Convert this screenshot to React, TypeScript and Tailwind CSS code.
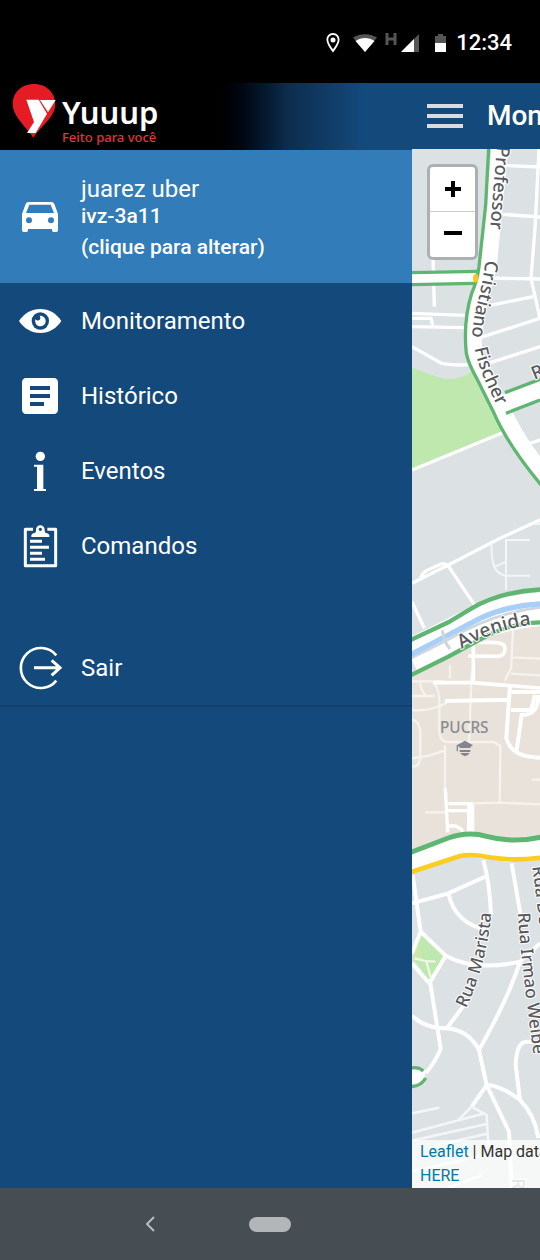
import React from "react";
import { MdArticle } from "react-icons/md";

function StatusBar() {
  return (
    <header className="flex h-[83px] shrink-0 items-center justify-end bg-black pt-[2px] pr-7 text-white">
      <svg className="mr-3 h-5 w-4" viewBox="0 0 16 20" aria-label="Localização">
        <path fillRule="evenodd" d="M8 0C4.100 0 1.500 3 1.500 6.700 1.500 11.500 8 19.500 8 19.500s6.500-8 6.500-12.800C14.500 3 11.900 0 8 0Zm0 2c2.700 0 4.700 2.100 4.700 4.700 0 2.900-2.900 7.100-4.700 9.600-1.800-2.500-4.700-6.700-4.700-9.600C3.300 4.100 5.300 2 8 2Z" fill="#fff" />
        <circle cx="8" cy="7" r="2.500" fill="#fff" />
      </svg>
      <svg className="mr-2 h-5 w-6" viewBox="0 0 24 20" aria-label="Wi-Fi">
        <path d="M0 4.500C7 0 17 0 24 4.500L12 19Z" fill="#555" />
        <path d="M2.500 8C8 4 16 4 21.500 8L12 19Z" fill="#fff" />
      </svg>
      <svg className="mr-4 h-5 w-[34px]" viewBox="0 0 34 20" aria-label="Sinal">
        <path d="M2 0V12M10 0V12M2 6H10" stroke="#555" strokeWidth="3" fill="none" />
        <path d="M34 1V19H16Z" fill="#555" />
        <path d="M29 6V19H16Z" fill="#fff" />
      </svg>
      <svg className="mr-[10px] h-5 w-[11px]" viewBox="0 0 11 20" aria-label="Bateria">
        <path d="M0 3H3V1H8V3H11V10H0Z" fill="#555" />
        <path d="M0 10H11V19H0Z" fill="#fff" />
      </svg>
      <time className="text-[22px] leading-7 font-medium">12:34</time>
    </header>
  );
}

function Logo() {
  return (
    <div className="flex h-[67px] bg-linear-to-r from-black from-50% via-[#0d2d4e] via-70% to-[#14497c] to-88% pl-3">
      <svg className="h-[65px] w-11 shrink-0" viewBox="36 24 132 195" aria-hidden="true">
        <path d="M102 27C65 27 38 53 38 87C38 124 77 153 100 188C123 153 166 126 166 87C166 53 138 27 102 27Z" fill="#e51c23" />
        <path d="M79 74H116L141 116L107 174H81L102 141Z" fill="#fff" />
        <path d="M120 75H167L144 112Z" fill="#fff" />
      </svg>
      <div className="ml-[6px] flex flex-col pt-[11px] font-['Noto_Sans',sans-serif]">
        <span className="text-[31px] leading-9 font-semibold text-white">Yuuup</span>
        <span className="text-[13px] leading-[14px] font-medium text-[#e3343c]">Feito para você</span>
      </div>
    </div>
  );
}

function CarIcon() {
  return (
    <svg className="size-12 shrink-0" viewBox="48 129 144 144" aria-hidden="true">
      <path fillRule="evenodd" d="M66 192L77 162Q79 156 86 156H154Q161 156 163 162L174 192V241Q174 246 169 246H161Q156 246 156 241V237H84V241Q84 246 79 246H71Q66 246 66 241ZM88 164L78 189H162L152 164ZM87 202A9 9 0 1 0 87 220A9 9 0 1 0 87 202ZM153 202A9 9 0 1 0 153 220A9 9 0 1 0 153 202Z" fill="#fff" />
    </svg>
  );
}

function EyeIcon() {
  return (
    <svg className="size-12" viewBox="48 36 144 144" aria-hidden="true">
      <path d="M57 108C72 85 95 72 121 72s48 13 63 36c-15 23-37 36-63 36S72 131 57 108Z" fill="#fff" />
      <circle cx="121" cy="108" r="26" fill="#14497c" />
      <path d="M121 92A16 16 0 1 1 106 103Q111 108 117 106Q124 101 119 92Z" fill="#fff" />
    </svg>
  );
}

function InfoIcon() {
  return (
    <svg className="size-12" viewBox="48 51 144 144" aria-hidden="true">
      <circle cx="121" cy="79" r="14" fill="#fff" />
      <path d="M102 104H130V177H138V183H102V177H111V110H102Z" fill="#fff" />
    </svg>
  );
}

function ClipboardIcon() {
  return (
    <svg className="size-12" viewBox="48 276 144 144" aria-hidden="true">
      <path d="M99 298H76V407H167V298H142" fill="none" stroke="#fff" strokeWidth="9" strokeLinejoin="round" />
      <path fillRule="evenodd" d="M94 321V315Q97 309 104 309Q109 308 108 299A13 13 0 1 1 134 299Q133 308 138 309Q145 309 148 315V321ZM121 293A5 5 0 1 0 121 303A5 5 0 1 0 121 293Z" fill="#fff" />
      <path d="M90 334H126M90 352H147M90 370H126M90 388H135" stroke="#fff" strokeWidth="9" />
    </svg>
  );
}

function ExitIcon() {
  return (
    <svg className="size-12" viewBox="48 72 144 144" aria-hidden="true">
      <path d="M169 106A60 60 0 1 0 169 182" fill="none" stroke="#fff" strokeWidth="8" />
      <path d="M102 143H180M155 121L180 143L155 166" fill="none" stroke="#fff" strokeWidth="9" />
    </svg>
  );
}

function MenuItem({ icon, label }: { icon: React.ReactNode; label: string }) {
  return (
    <a href="#" className="flex h-[75px] items-center gap-[17px] px-4 text-2xl text-white">
      {icon}
      <span>{label}</span>
    </a>
  );
}

function Drawer() {
  return (
    <aside className="w-[412px] shrink-0 bg-[#14497c]">
      <div className="border-b-2 border-[#123f6c]">
        <Logo />
        <button type="button" className="flex h-[133px] w-full items-center gap-[17px] bg-[#317cb9] px-4 text-left text-white">
          <CarIcon />
          <span className="flex flex-col pt-[6px]">
            <span className="text-2xl leading-7">juarez uber</span>
            <span className="text-[21px] leading-[26px] font-medium">ivz-3a11</span>
            <span className="text-[21px] leading-9 font-medium">(clique para alterar)</span>
          </span>
        </button>
        <nav>
          <MenuItem icon={<EyeIcon />} label="Monitoramento" />
          <MenuItem icon={<MdArticle className="size-12" />} label="Histórico" />
          <MenuItem icon={<InfoIcon />} label="Eventos" />
          <MenuItem icon={<ClipboardIcon />} label="Comandos" />
          <div className="mt-[47px]">
            <MenuItem icon={<ExitIcon />} label="Sair" />
          </div>
        </nav>
      </div>
    </aside>
  );
}

function MapDrawing() {
  return (
    <svg className="absolute inset-0 size-full" viewBox="21 12 384 3117" preserveAspectRatio="xMinYMin slice" aria-label="Mapa">
      <defs>
        <path id="professor" d="M276 2L253 280" />
        <path id="cristiano" d="M242 345Q232 420 217 475Q204 520 200 600" />
        <path id="fischer" d="M209 610Q221 680 286 800" />
        <path id="avenida" d="M170 1512Q270 1451 415 1433" />
        <path id="marista" d="M183 2590Q250 2450 262 2270" />
        <path id="irmao" d="M338 2304Q350 2480 402 2850" />
      </defs>
      <rect x="21" y="12" width="2400" height="3117" fill="#dce1e4" />
      <path d="M21 668L95 695Q150 715 198 680L290 860L21 975Z" fill="#bfe8af" />
      <path d="M21 1580L250 1470Q320 1435 420 1433V2080L300 2085L190 2065L21 2120Z" fill="#e8e2da" />
      <path d="M47 2360L120 2432L73 2510L25 2440Z" fill="#bfe8af" />
      <path d="M32 2390L44 2410L52 2435L21 2450Z" fill="#cfe6ac" />

      <g fill="none" stroke="#fff" strokeWidth="10">
        <path d="M290 61L405 66M275 207L405 216M402 12L390 250L378 400L405 520M235 399L405 402M250 482L385 455M225 578L405 520M250 655L405 605" />
        <path d="M84 340L88 485M21 505L180 511M21 545L180 548M21 520H78L84 545M21 605L110 655Q150 663 200 658M21 975L300 860M360 900L405 885" />
        <path d="M21 1315L140 1255L285 1180L405 1125M48 1297Q52 1280 75 1272L108 1257Q120 1253 132 1266L210 1382M21 1370L58 1450" />
      </g>
      <g fill="none" stroke="#f3f5f6" strokeWidth="6">
        <path d="M260 1195Q255 1290 305 1292H375M375 1185H303V1335M270 1265L303 1250M390 1137H405" />
      </g>

      <path d="M287 -10L268 180L250 370Q210 490 205 585Q205 640 248 715L315 840Q350 910 430 1005" fill="none" stroke="#fff" strokeWidth="50" />
      <path d="M21 400H215" stroke="#fff" strokeWidth="32" />
      <path d="M290 776L415 732" stroke="#fff" strokeWidth="48" />
      <g fill="none" stroke="#5fb572" strokeWidth="10">
        <path d="M251 10L242 180L222 365Q216 410 200 445Q174 530 184 625Q190 655 215 700L265 800Q305 895 410 1022" />
        <path d="M21 383L220 379M21 419L208 415M300 743L405 703M303 805L405 765" />
      </g>
      <ellipse cx="212" cy="400" rx="8" ry="13" fill="#f4c81c" />

      <g fill="none" stroke="#f6f3ee" strokeWidth="7">
        <path d="M21 1609H120M45 1615Q52 1645 64 1652M21 1653H90M85 1612Q105 1635 103 1680V1765Q107 1790 130 1791H265L286 1802L284 1972M21 1695Q80 1700 130 1670M135 1560V1600M200 1580L192 1800" />
        <path d="M120 1800V1950M21 1840Q75 1835 118 1816M21 1724Q46 1730 46 1765V1835Q46 1865 21 1865M60 2002H120M205 1975L285 1973L405 1978M380 1904H405M325 1440L318 1570L300 1607M318 1537L405 1541M318 1586L405 1591" />
      </g>
      <g fill="none" stroke="#fff">
        <path d="M205 1495V1612M190 1533L280 1534Q300 1532 300 1510Q300 1492 260 1492H215M85 1613H200L405 1629" strokeWidth="11" />
        <path d="M120 1668L310 1664M315 1620L304 1780Q320 1838 405 1838M320 1641H405M318 1695H378L390 1650M335 1815L350 1710Q400 1712 400 1650" strokeWidth="12" />
        <path d="M121 1930L128 2062M130 1976H200V2065M128 1997H195M130 2045Q155 2035 175 2060" strokeWidth="10" />
        <path d="M197 1980V2065" strokeWidth="22" />
      </g>

      <path d="M15 1534L130 1477Q260 1402 415 1392" fill="none" stroke="#fff" strokeWidth="102" />
      <path d="M15 1541L130 1484Q270 1401 415 1386" fill="none" stroke="#ced7df" strokeWidth="8" />
      <path d="M15 1530L130 1470L225 1420Q310 1380 415 1376" fill="none" stroke="#a7cff8" strokeWidth="16" />
      <path d="M112 1456L118 1485M120 1490L135 1512" stroke="#ced7d5" strokeWidth="9" />
      <g fill="none" stroke="#5fb572" strokeWidth="13">
        <path d="M15 1486L130 1432L200 1390Q290 1338 415 1333" />
        <path d="M15 1592L130 1535L250 1470Q330 1432 415 1432" />
      </g>

      <path d="M15 2152L165 2098L310 2115L410 2105" fill="none" stroke="#fff" strokeWidth="70" />
      <path d="M15 2123L130 2079Q190 2058 245 2074Q320 2095 410 2076" fill="none" stroke="#5fb572" strokeWidth="15" />
      <path d="M15 2182L165 2133Q205 2126 260 2138Q320 2148 410 2138" fill="none" stroke="#facd1f" strokeWidth="14" />

      <g fill="none" stroke="#fff" strokeWidth="12">
        <path d="M23 2190L47 2360L21 2425M21 2275L130 2245L245 2193M235 2145Q255 2220 258 2310M130 2245Q150 2335 245 2355M320 2155L350 2330" />
        <path d="M45 2358L122 2432Q210 2480 345 2450L405 2395M122 2432L73 2515L21 2455M75 2510L107 2710Q95 2745 62 2785" />
        <path d="M21 2612Q60 2650 125 2650Q190 2655 222 2715L245 2820L312 2960L320 3130M125 2650L185 2570M345 2450Q310 2560 222 2715M200 2885L245 2820Q285 2820 345 2865Q390 2910 400 2980M345 2865L332 2760Q335 2690 365 2690H405" />
        <path d="M28 2440Q60 2450 92 2450M64 2448L78 2500" stroke="#eef6e6" strokeWidth="7" />
      </g>
      <g fill="none" stroke="#f3f5f6" strokeWidth="8">
        <path d="M21 2905L103 2888M21 2963L240 2905M21 2987L245 2937M100 3000L250 2965M200 2885L160 2925M200 2885L245 2910L250 3000M21 3080L260 3025M130 3129L230 3090" />
      </g>
      <path d="M21 2795H60" stroke="#fff" strokeWidth="42" />
      <path d="M15 2770Q40 2763 55 2778M15 2825Q48 2825 62 2799" fill="none" stroke="#5fb572" strokeWidth="10" />

      <g className="font-['Noto_Sans',sans-serif] font-medium" fill="#58595e" stroke="#fff" strokeWidth="6" paintOrder="stroke" strokeLinejoin="round" fontSize="55">
        <text><textPath href="#professor">Professor</textPath></text>
        <text><textPath href="#cristiano">Cristiano</textPath></text>
        <text><textPath href="#fischer">Fischer</textPath></text>
        <text fontSize="58"><textPath href="#avenida">Avenida</textPath></text>
        <text fontSize="52"><textPath href="#marista">Rua Marista</textPath></text>
        <text fontSize="52"><textPath href="#irmao">Rua Irmao Weibe</textPath></text>
        <text fontSize="52" transform="translate(382 2165) rotate(83)">Rua De</text>
        <text transform="translate(388 705) rotate(-22)">R</text>
        <text transform="translate(320 3100) rotate(90)" fill="#999">R</text>
        <text x="105" y="1763" fontSize="46" fill="#8a8b93" stroke="#e8e2da">PUCRS</text>
      </g>
      <path d="M155 1801L180 1787L204 1801L196 1806V1809H164V1806L159 1804V1819H155ZM164 1815H196V1821H164ZM166 1824H194Q192 1830 180 1834Q168 1830 166 1824Z" fill="#85858f" />
    </svg>
  );
}

function MapPane() {
  return (
    <main className="flex min-w-0 flex-1 flex-col overflow-hidden">
      <div className="flex h-[66px] shrink-0 items-center gap-6 bg-[#14497c] pl-[15px] text-white">
        <button type="button" aria-label="Abrir menu" className="flex w-9 shrink-0 flex-col gap-[6px]">
          <span className="h-1 w-full bg-[#d9dbe0]" />
          <span className="h-1 w-full bg-[#d9dbe0]" />
          <span className="h-1 w-full bg-[#d9dbe0]" />
        </button>
        <h1 className="text-[28px] leading-9 font-medium whitespace-nowrap">Monitoramento</h1>
      </div>
      <section className="relative flex flex-1 flex-col overflow-hidden">
        <MapDrawing />
        <div className="absolute top-[15px] left-[15px] flex w-[51px] flex-col rounded-md border-3 border-[#adb0b3] bg-white text-black">
          <button type="button" aria-label="Aproximar" className="flex h-[45px] items-center justify-center border-b border-[#ccc]">
            <svg className="size-5" viewBox="0 0 20 20"><path d="M2 10H18M10 2V18" stroke="currentColor" strokeWidth="4" /></svg>
          </button>
          <button type="button" aria-label="Afastar" className="flex h-[45px] items-center justify-center pb-1">
            <svg className="size-5" viewBox="0 0 20 20"><path d="M1 10H19" stroke="currentColor" strokeWidth="4" /></svg>
          </button>
        </div>
        <footer className="relative mt-auto h-12 overflow-hidden bg-white/75 pl-2 text-base text-[#333]">
          <div className="w-64">
            <a href="#" className="text-[#0078a8]">Leaflet</a> | Map data © 2020
            <br />
            <a href="#" className="text-[#0078a8]">HERE</a>
          </div>
        </footer>
      </section>
    </main>
  );
}

function SystemNav() {
  return (
    <footer className="grid h-[72px] shrink-0 grid-cols-3 items-center bg-[#464e53]">
      <button type="button" aria-label="Voltar" className="flex justify-end pr-6">
        <svg className="h-4 w-[11px]" viewBox="0 0 11 16"><path d="M9 1L2 8L9 15" fill="none" stroke="#b9bcbf" strokeWidth="2" /></svg>
      </button>
      <button type="button" aria-label="Início" className="h-[15px] w-[42px] justify-self-center rounded-full bg-[#b3b6b8]" />
    </footer>
  );
}

export default function App() {
  return (
    <div className="flex min-h-screen flex-col overflow-hidden bg-black font-['Roboto',sans-serif]">
      <StatusBar />
      <div className="flex flex-1">
        <Drawer />
        <MapPane />
      </div>
      <SystemNav />
    </div>
  );
}
